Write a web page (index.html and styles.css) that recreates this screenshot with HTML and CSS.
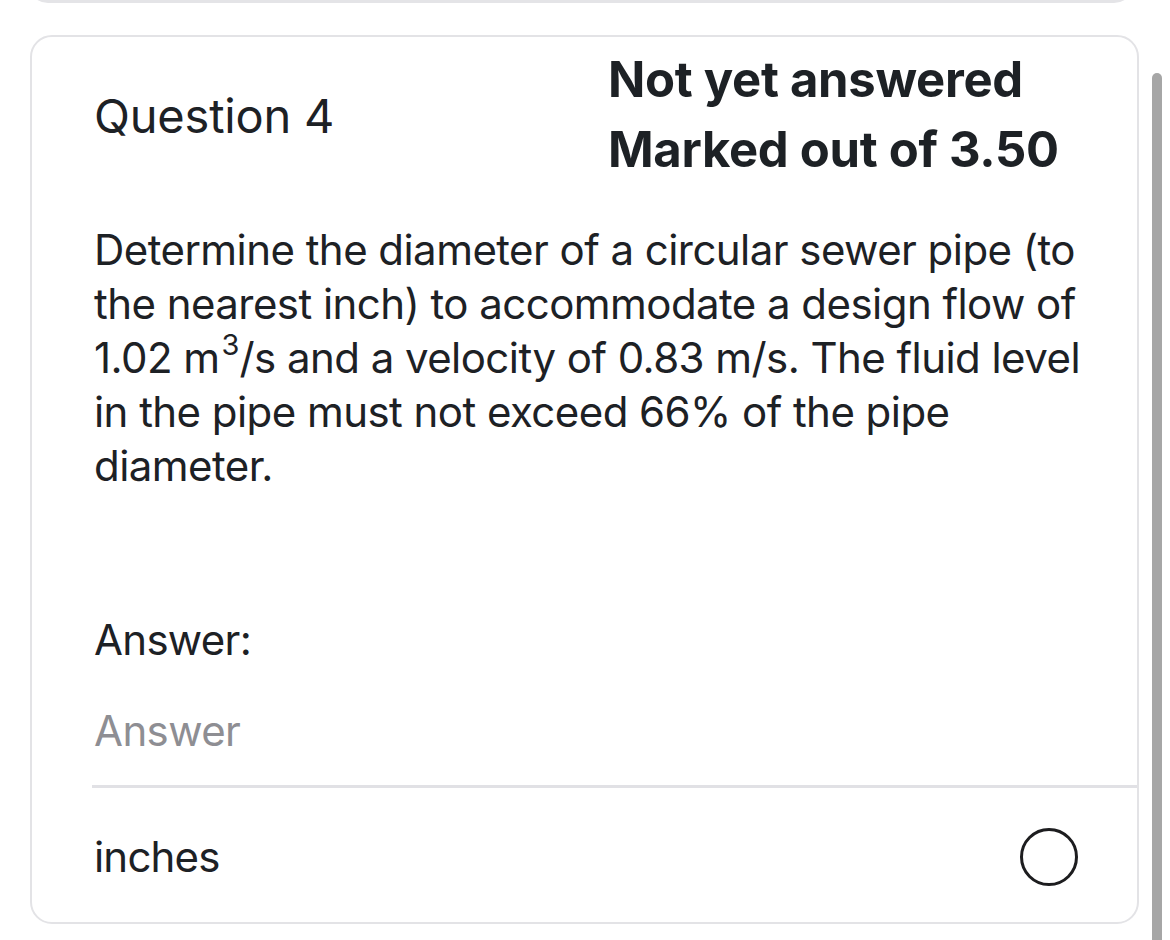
FILE: index.html
```html
<!DOCTYPE html>
<html lang="en">
<head>
<meta charset="utf-8">
<title>Question 4</title>
<link rel="stylesheet" href="styles.css">
</head>
<body>
<div class="page">
  <div class="prev-card"></div>
  <section class="que">
    <header class="que-head">
      <h3 class="que-no">Question 4</h3>
      <div class="que-state">
        <div>Not yet answered</div>
        <div>Marked out of 3.50</div>
      </div>
    </header>
    <p class="que-text">Determine the diameter of a circular sewer pipe (to the nearest inch) to accommodate a design flow of 1.02 m<span class="sup">3</span>/s and a velocity of 0.83 m/s. The fluid level in the pipe must not exceed 66% of the pipe diameter.</p>
    <label class="ans-label" for="ans">Answer:</label>
    <input class="ans-input" id="ans" type="text" placeholder="Answer">
    <div class="unit-row">
      <span class="unit">inches</span>
      <span class="radio"></span>
    </div>
  </section>
</div>
<div class="scrollbar"></div>
</body>
</html>
```
FILE: styles.css
```css
* { box-sizing: border-box; }
html, body { margin: 0; padding: 0; background: #ffffff; }
body {
  font-family: "Inter", "Noto Sans", sans-serif;
  color: #1d2125;
  width: 1170px;
  height: 940px;
  overflow: hidden;
}
.page {
  padding: 0 32px 0 30px;
}
.prev-card {
  height: 40px;
  margin: -37px 4px 0 -2px;
  border: 3px solid #e4e4e7;
  border-radius: 20px;
}
.que {
  margin-top: 32px;
  width: 1109px;
  border: 2.5px solid #e3e3e6;
  border-radius: 22px;
  padding: 8px 20px 36px 62px;
  background: #fff;
}
.que-head {
  display: grid;
  grid-template-columns: 514px 1fr;
  align-items: center;
}
.que-no {
  margin: 0;
  font-size: 47px;
  font-weight: 400;
  letter-spacing: -0.2px;
}
.que-state {
  font-size: 49px;
  font-weight: 700;
  line-height: 70px;
  letter-spacing: -0.3px;
}
.que-text {
  margin: 38px 0 0;
  font-size: 42px;
  line-height: 54px;
  letter-spacing: -0.55px;
}
.que-text .sup {
  display: inline-block;
  margin-left: 2px;
  font-size: 29px;
  line-height: 22px;
  vertical-align: 18px;
  letter-spacing: 0;
}
.ans-label {
  display: block;
  margin-top: 120px;
  font-size: 42px;
  line-height: 54px;
  letter-spacing: -0.7px;
}
.ans-input {
  display: block;
  width: calc(100% + 22px);
  margin: 37px 0 0 -2px;
  padding: 0 0 27px 2px;
  border: 0;
  border-bottom: 3px solid #e1e1e5;
  font-family: inherit;
  font-size: 42px;
  line-height: 54px;
  letter-spacing: -0.6px;
  color: #1d2125;
  background: transparent;
  outline: none;
}
.ans-input::placeholder { color: #8e8e93; }
.unit-row {
  display: flex;
  align-items: center;
  justify-content: space-between;
  margin-top: 40px;
  padding-right: 39px;
}
.unit {
  font-size: 42px;
  line-height: 54px;
  letter-spacing: -0.8px;
}
.radio {
  width: 58px;
  height: 58px;
  border: 3px solid #1d1d1f;
  border-radius: 50%;
}
.scrollbar {
  position: absolute;
  left: 1152px;
  top: 73px;
  width: 10px;
  height: 900px;
  background: #a6a6a6;
  border-radius: 5px;
}
```
